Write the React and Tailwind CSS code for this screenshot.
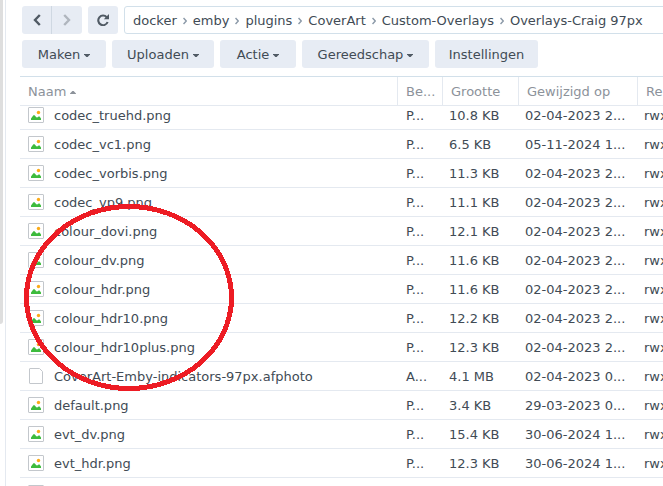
import { useLayoutEffect, useRef } from "react";

const path = ["docker", "emby", "plugins", "CoverArt", "Custom-Overlays", "Overlays-Craig 97px"];

const actions = [
  { label: "Maken", menu: true, width: "w-[84px]" },
  { label: "Uploaden", menu: true, width: "w-[102px]" },
  { label: "Actie", menu: true, width: "w-[76px]" },
  { label: "Gereedschap", menu: true, width: "w-[127px]" },
  { label: "Instellingen", menu: false, width: "w-[103px]" },
];

const columns = ["Be...", "Grootte", "Gewijzigd op", "Re"];

const files = [
  { name: "codec_truehd.png", type: "P...", size: "10.8 KB", date: "02-04-2023 2..." },
  { name: "codec_vc1.png", type: "P...", size: "6.5 KB", date: "05-11-2024 1..." },
  { name: "codec_vorbis.png", type: "P...", size: "11.3 KB", date: "02-04-2023 2..." },
  { name: "codec_vp9.png", type: "P...", size: "11.1 KB", date: "02-04-2023 2..." },
  { name: "colour_dovi.png", type: "P...", size: "12.1 KB", date: "02-04-2023 2..." },
  { name: "colour_dv.png", type: "P...", size: "11.6 KB", date: "02-04-2023 2..." },
  { name: "colour_hdr.png", type: "P...", size: "11.6 KB", date: "02-04-2023 2..." },
  { name: "colour_hdr10.png", type: "P...", size: "12.2 KB", date: "02-04-2023 2..." },
  { name: "colour_hdr10plus.png", type: "P...", size: "12.3 KB", date: "02-04-2023 2..." },
  { name: "CoverArt-Emby-indicators-97px.afphoto", type: "A...", size: "4.1 MB", date: "02-04-2023 0..." },
  { name: "default.png", type: "P...", size: "3.4 KB", date: "29-03-2023 0..." },
  { name: "evt_dv.png", type: "P...", size: "15.4 KB", date: "30-06-2024 1..." },
  { name: "evt_hdr.png", type: "P...", size: "12.3 KB", date: "30-06-2024 1..." },
];

function ImageIcon() {
  return (
    <svg className="size-4 shrink-0" viewBox="0 0 16 16" fill="none">
      <rect x="0.5" y="0.5" width="15" height="15" rx="0.5" fill="#fff" stroke="#c3c7cc" />
      <circle cx="10.5" cy="5.5" r="1.7" fill="#fbab18" />
      <path d="M3 13v-1.4l2.4-3.4h1.2L8.3 10.3l.9.3 1.4-1.2h1L13 11.4V13z" fill="#3dbb3d" />
    </svg>
  );
}

function FileIcon() {
  return (
    <svg className="size-4 shrink-0" viewBox="0 0 16 16" fill="none">
      <path d="M2 .5h9.5l3 3V15a.5.5 0 0 1-.5.5H2a.5.5 0 0 1-.5-.5V1A.5.5 0 0 1 2 .5z" fill="#fff" stroke="#c3c7cc" />
    </svg>
  );
}

function Chevron({ flip, className }) {
  return (
    <svg className={className} viewBox="0 0 8 12" fill="none" stroke="currentColor" strokeWidth="2.4">
      <path d={flip ? "M6.8 1 2 6l4.8 5" : "M1.2 1 6 6l-4.8 5"} />
    </svg>
  );
}

function Toolbar() {
  return (
    <div className="space-y-1.5 pl-0.5">
      <div className="flex gap-1.5">
        <div className="flex shrink-0 overflow-hidden rounded-[3px] bg-[#e7ecf4]">
          <button aria-label="Vorige" className="flex h-7 w-[30px] items-center justify-center border-r border-[#cfd8e2] text-[#505a64]">
            <Chevron flip className="h-3 w-2" />
          </button>
          <button aria-label="Volgende" className="flex h-7 w-[30px] items-center justify-center text-[#b0b6be]">
            <Chevron className="h-3 w-2" />
          </button>
        </div>
        <button aria-label="Vernieuwen" className="flex h-7 w-[30px] shrink-0 items-center justify-center rounded-[3px] bg-[#e7ecf4] text-[#505a64]">
          <svg className="size-3" viewBox="0 0 12 12" fill="none">
            <path d="M9.7 3.2A4.8 4.8 0 1 0 10.6 8" stroke="currentColor" strokeWidth="2.1" />
            <path d="M12 0v5.2H6.8z" fill="currentColor" />
          </svg>
        </button>
        <nav className="-mr-2 flex h-7 min-w-0 flex-1 items-center gap-1.5 overflow-hidden rounded-[3px] border border-[#d2e0ea] pt-0.5 pl-2 whitespace-nowrap">
          {path.map((part, i) => (
            <span key={part} className="flex items-center gap-1.5">
              {i > 0 && (
                <svg className="h-2 w-1" viewBox="0 0 4 8" fill="none" stroke="#8b99a8" strokeWidth="1.5">
                  <path d="M.5 1 3.3 4 .5 7" />
                </svg>
              )}
              <a href="#">{part}</a>
            </span>
          ))}
        </nav>
      </div>
      <div className="flex gap-1.5">
        {actions.map((action) => (
          <button
            key={action.label}
            className={`${action.width} flex h-7 shrink-0 items-center justify-center gap-1 rounded-[3px] bg-[#e7ecf4] pt-0.5`}
          >
            {action.label}
            {action.menu && (
              <svg className="h-[3px] w-1.5" viewBox="0 0 6 3">
                <path d="M0 0h6v.6L3.6 3H2.4L0 .6z" fill="#505a64" />
              </svg>
            )}
          </button>
        ))}
      </div>
    </div>
  );
}

function FileList() {
  const scroller = useRef(null);

  useLayoutEffect(() => {
    scroller.current.scrollTop = 5;
  }, []);

  return (
    <div ref={scroller} className="mt-2 min-h-0 flex-1 overflow-hidden border-t border-[#d2e0ea]">
      <table className="w-full table-fixed border-separate border-spacing-0 text-left whitespace-nowrap">
        <colgroup>
          <col />
          <col className="w-[45px]" />
          <col className="w-[76px]" />
          <col className="w-[119px]" />
          <col className="w-[25px]" />
        </colgroup>
        <thead className="sticky top-0 bg-white text-[#8c929a]">
          <tr className="h-[29px]">
            <th className="border-r border-b border-[#e4e9f0] pt-0.5 pl-2 font-normal">
              <span className="flex items-center gap-1">
                Naam
                <svg className="h-[3px] w-1.5" viewBox="0 0 6 3">
                  <path d="M0 3h6v-.6L3.6 0H2.4L0 2.4z" fill="#8c929a" />
                </svg>
              </span>
            </th>
            {columns.map((column) => (
              <th key={column} className="overflow-hidden border-r border-b border-[#e4e9f0] pt-0.5 pl-2 font-normal last:border-r-0">
                {column}
              </th>
            ))}
          </tr>
        </thead>
        <tbody>
          {files.map((file) => (
            <tr key={file.name} className="h-[29px]">
              <td className="border-b border-[#e4e9f0] pl-2">
                <span className="flex items-center gap-2.5">
                  {file.name.endsWith(".png") ? <ImageIcon /> : <FileIcon />}
                  <span className="pt-0.5">{file.name}</span>
                </span>
              </td>
              <td className="border-b border-[#e4e9f0] pt-0.5 pl-2">{file.type}</td>
              <td className="border-b border-[#e4e9f0] pt-0.5 pl-1.5">{file.size}</td>
              <td className="border-b border-[#e4e9f0] pt-0.5 pl-1.5">{file.date}</td>
              <td className="overflow-hidden border-b border-[#e4e9f0] pt-0.5 pl-1.5">rwx</td>
            </tr>
          ))}
          <tr className="h-[29px]">
            <td className="pl-2" colSpan={5}>
              <ImageIcon />
            </td>
          </tr>
        </tbody>
      </table>
    </div>
  );
}

export default function App() {
  return (
    <div className="relative flex h-screen overflow-hidden bg-white font-['DejaVu_Sans',Verdana,sans-serif] text-[13px] leading-4 text-[#414b55]">
      {/* edge of the folder tree with its scrollbar */}
      <div className="w-1.5 shrink-0 border-r border-[#e4e9f0]">
        <div className="h-2/3 w-[3px] rounded-br-[3px] bg-[#dedede]" />
      </div>
      <main className="flex min-w-0 flex-1 flex-col pt-1.5 pl-3.5">
        <Toolbar />
        <FileList />
      </main>

      {/* red marker round the colour_* files */}
      <svg className="pointer-events-none absolute top-[204px] left-6 h-[187px] w-[210px]" viewBox="0 0 210 187" fill="none">
        <ellipse cx="105" cy="93.5" rx="102.5" ry="91" stroke="#ed1c24" strokeWidth="5" shapeRendering="crispEdges" />
      </svg>
    </div>
  );
}
